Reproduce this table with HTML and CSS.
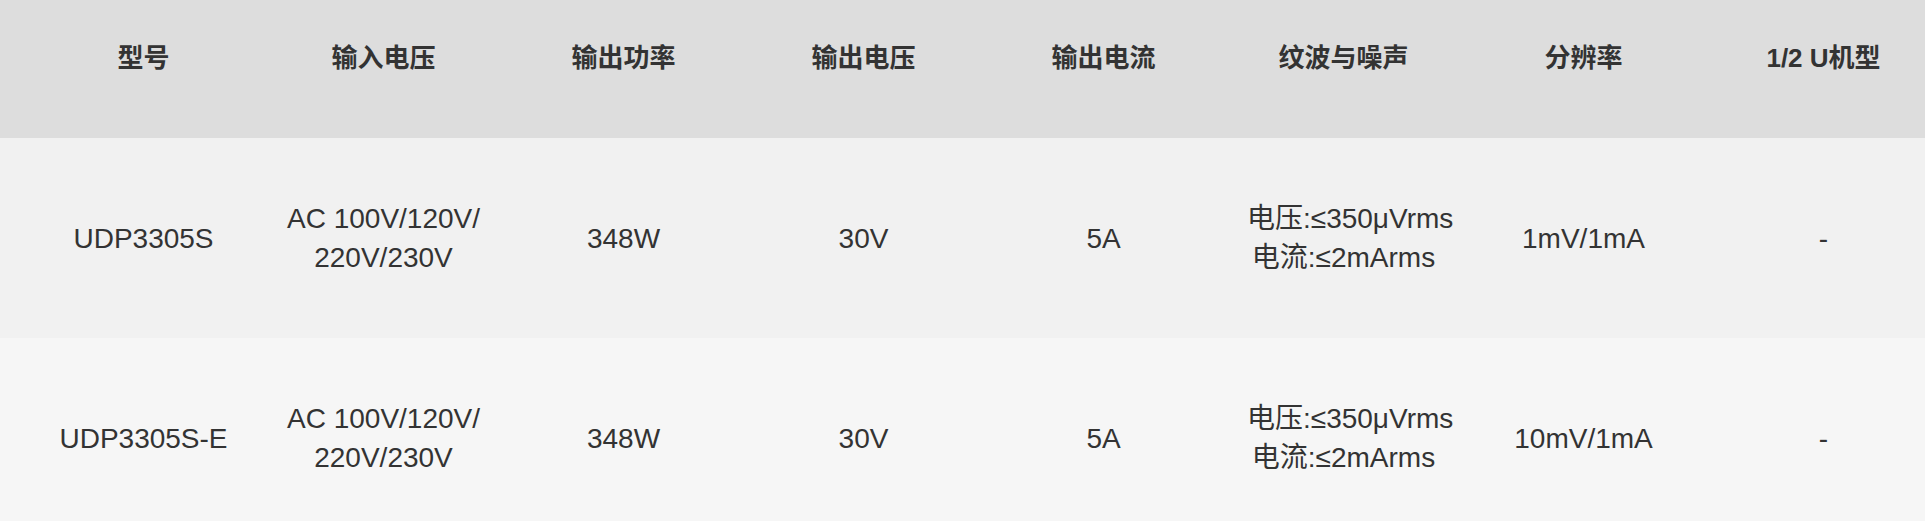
FILE: index.html
```html
<!DOCTYPE html>
<html lang="zh-CN">
<head>
<meta charset="utf-8">
<title>UDP3305S 系列参数</title>
<link rel="stylesheet" href="styles.css">
</head>
<body>
<table class="spec-table">
  <colgroup>
    <col class="c"><col class="c"><col class="c"><col class="c"><col class="c"><col class="c"><col class="c"><col class="c-last">
  </colgroup>
  <thead>
    <tr class="head-row">
      <th>型号</th>
      <th>输入电压</th>
      <th>输出功率</th>
      <th>输出电压</th>
      <th>输出电流</th>
      <th>纹波与噪声</th>
      <th>分辨率</th>
      <th>1/2 U机型</th>
    </tr>
  </thead>
  <tbody>
    <tr class="row row-odd">
      <td>UDP3305S</td>
      <td>AC 100V/120V/<br>220V/230V</td>
      <td>348W</td>
      <td>30V</td>
      <td>5A</td>
      <td class="ripple"><span class="line">电压:≤350μVrms</span><span class="line">电流:≤2mArms</span></td>
      <td>1mV/1mA</td>
      <td>-</td>
    </tr>
    <tr class="row row-even">
      <td>UDP3305S-E</td>
      <td>AC 100V/120V/<br>220V/230V</td>
      <td>348W</td>
      <td>30V</td>
      <td>5A</td>
      <td class="ripple"><span class="line">电压:≤350μVrms</span><span class="line">电流:≤2mArms</span></td>
      <td>10mV/1mA</td>
      <td>-</td>
    </tr>
  </tbody>
</table>
</body>
</html>
```

FILE: styles.css
```css
html, body {
  margin: 0;
  padding: 0;
  background: #ffffff;
  overflow: hidden;
}

body {
  font-family: "Liberation Sans", Arial, "Noto Sans CJK SC", sans-serif;
  color: #333333;
}

.spec-table {
  width: 100%;
  border-collapse: collapse;
  table-layout: fixed;
}

.spec-table col.c {
  width: 240px;
}

.spec-table th,
.spec-table td {
  padding: 0 0 0 47px;
  text-align: center;
  white-space: nowrap;
}

.spec-table th:last-child,
.spec-table td:last-child {
  padding-right: 5px;
}

.head-row {
  background: #dddddd;
}

.head-row th {
  height: 138px;
  box-sizing: border-box;
  padding-top: 40px;
  padding-bottom: 62px;
  vertical-align: top;
  font-size: 26px;
  line-height: 36px;
  font-weight: bold;
  color: #333333;
}

.row td {
  height: 200px;
  vertical-align: middle;
  font-size: 28px;
  line-height: 39px;
  font-weight: normal;
}

.ripple .line {
  display: block;
}

.ripple .line:first-child {
  margin-right: 16px;
}

.row-odd {
  background: #f1f1f1;
}

.row-even {
  background: #f6f6f6;
}
```
